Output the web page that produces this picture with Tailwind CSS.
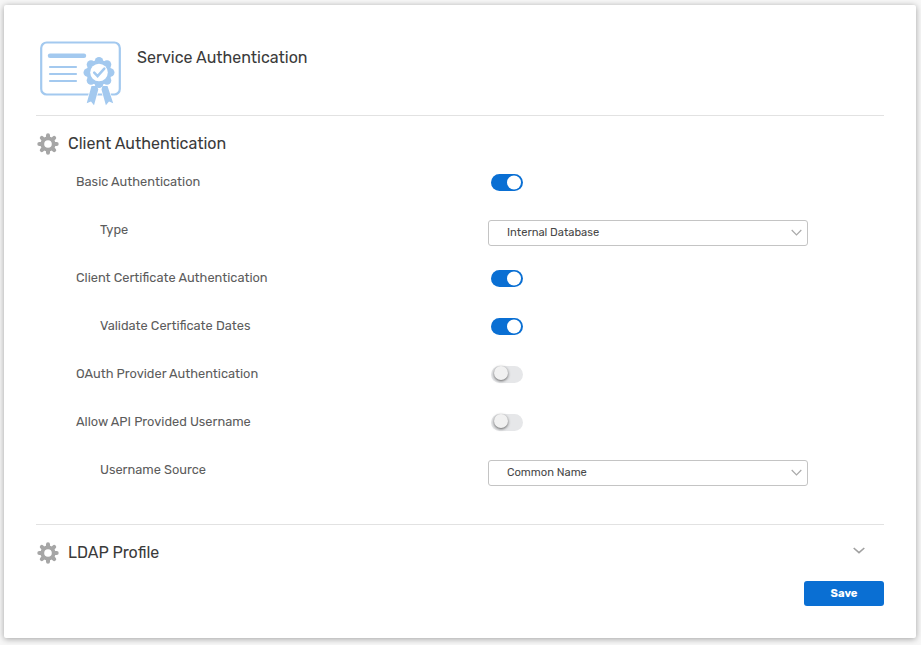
<!DOCTYPE html>
<html lang="en">
<head>
<meta charset="utf-8">
<title>Service Authentication</title>
<script src="https://cdn.jsdelivr.net/npm/@tailwindcss/browser@4"></script>
</head>
<body class="h-[645px] overflow-hidden bg-[#f7f7f7] pt-[5px] pl-1 font-['Rubik','Roboto',sans-serif] text-[12.8px] font-normal text-[#5c5c5c]">
<svg class="hidden">
  <defs>
    <g id="gear">
      <g stroke="#a6a6a6" stroke-width="4" stroke-linecap="round">
        <path d="M11 2.300V19.700M2.300 11H19.700M4.800 4.800L17.200 17.200M17.200 4.800L4.800 17.200"/>
      </g>
      <circle cx="11" cy="11" r="7.600" fill="#a6a6a6"/>
      <circle cx="11" cy="11" r="3.800" fill="#fff"/>
    </g>
  </defs>
</svg>
<main class="h-[633px] w-[912px] rounded-xs bg-white px-8 shadow-[0_1px_6px_rgba(0,0,0,0.35)]">
  <header class="flex h-[111px] border-b border-[#e2e2e2] pt-[35px] pl-1">
    <svg class="h-[66px] w-[82px] shrink-0" viewBox="0 0 82 66" fill="none">
      <rect x="1.2" y="2.500" width="78.600" height="52" rx="5.500" stroke="#a3c9ef" stroke-width="2.200"/>
      <path d="M10 15.700H44" stroke="#a3c9ef" stroke-width="4.400" stroke-linecap="round"/>
      <path d="M10 27H36M10 34H36M10 41H36" stroke="#a3c9ef" stroke-width="2.200" stroke-linecap="round"/>
      <g fill="#a3c9ef" stroke="#fff" stroke-width="1.400" paint-order="stroke">
        <path d="M51.500 46L46.700 63.300L51 61.500L54 65.200L58.300 49.500L57 46ZM67.500 46L73.200 63.300L69 61.500L65.900 65.200L61.500 49.500L62.500 46Z"/>
      </g>
      <g fill="#a3c9ef">
        <circle cx="59" cy="32.500" r="12.500"/>
        <circle cx="59" cy="21.300" r="4.300"/><circle cx="67" cy="24.600" r="4.300"/>
        <circle cx="70.200" cy="32.500" r="4.300"/><circle cx="67" cy="40.400" r="4.300"/>
        <circle cx="59" cy="43.700" r="4.300"/><circle cx="51" cy="40.400" r="4.300"/>
        <circle cx="47.800" cy="32.500" r="4.300"/><circle cx="51" cy="24.600" r="4.300"/>
      </g>
      <circle cx="59" cy="32.500" r="8.800" fill="#fff"/>
      <path d="M54.200 32.600L57.600 36.200L64.300 28.700" stroke="#a3c9ef" stroke-width="2.500" stroke-linecap="round"/>
    </svg>
    <h1 class="ml-[15px] pt-[6px] text-[16px] leading-6 text-[#3a3a3a]">Service Authentication</h1>
  </header>

  <section class="h-[409px] border-b border-[#e2e2e2] pt-4">
    <div class="flex h-6 items-center">
      <svg class="h-[22px] w-[22px] translate-x-[1px]" viewBox="0 0 22 22"><use href="#gear"/></svg>
      <h2 class="ml-[10px] text-[16px] leading-6 text-[#3a3a3a]">Client Authentication</h2>
    </div>
    <div class="grid auto-rows-[48px] grid-cols-[412px_320px] pl-10 pt-[3px] leading-6">
      <div class="pt-[11px]">Basic Authentication</div>
      <div class="pt-[15px] pl-[3px]"><div class="flex h-[17px] w-8 items-center justify-end rounded-full bg-[#0a6fd3] pr-[2px]"><span class="size-[14px] -translate-y-[0.5px] rounded-full bg-white"></span></div></div>

      <div class="pt-[11px] pl-6">Type</div>
      <div class="pt-[13px]"><div class="flex h-[26px] items-center justify-between rounded-[3px] border border-[#c4c4c4] pr-[5px] pl-[18px] text-[11.2px] text-[#484848]"><span>Internal Database</span><svg class="h-[7px] w-[11px] -translate-y-[1px]" viewBox="0 0 11 7" fill="none" stroke="#a9a9a9" stroke-width="1.200"><path d="M.7 1L5.500 5.800L10.300 1"/></svg></div></div>

      <div class="pt-[11px]">Client Certificate Authentication</div>
      <div class="pt-[15px] pl-[3px]"><div class="flex h-[17px] w-8 items-center justify-end rounded-full bg-[#0a6fd3] pr-[2px]"><span class="size-[14px] -translate-y-[0.5px] rounded-full bg-white"></span></div></div>

      <div class="pt-[11px] pl-6">Validate Certificate Dates</div>
      <div class="pt-[15px] pl-[3px]"><div class="flex h-[17px] w-8 items-center justify-end rounded-full bg-[#0a6fd3] pr-[2px]"><span class="size-[14px] -translate-y-[0.5px] rounded-full bg-white"></span></div></div>

      <div class="pt-[11px]">OAuth Provider Authentication</div>
      <div class="pt-[15px] pl-[3px]"><div class="flex h-[17px] w-8 rounded-full bg-[#e6e7e9] pl-[2.5px]"><span class="size-[14px] rounded-full bg-[#f1f1f1] shadow-[0_1px_3px_rgba(0,0,0,0.6)]"></span></div></div>

      <div class="pt-[11px]">Allow API Provided Username</div>
      <div class="pt-[15px] pl-[3px]"><div class="flex h-[17px] w-8 rounded-full bg-[#e6e7e9] pl-[2.5px]"><span class="size-[14px] rounded-full bg-[#f1f1f1] shadow-[0_1px_3px_rgba(0,0,0,0.6)]"></span></div></div>

      <div class="pt-[11px] pl-6">Username Source</div>
      <div class="pt-[13px]"><div class="flex h-[26px] items-center justify-between rounded-[3px] border border-[#c4c4c4] pr-[5px] pl-[18px] text-[11.2px] text-[#484848]"><span>Common Name</span><svg class="h-[7px] w-[11px] -translate-y-[1px]" viewBox="0 0 11 7" fill="none" stroke="#a9a9a9" stroke-width="1.200"><path d="M.7 1L5.500 5.800L10.300 1"/></svg></div></div>
    </div>
  </section>

  <section class="flex h-[56px] items-center">
    <svg class="h-[22px] w-[22px] translate-x-[1px]" viewBox="0 0 22 22"><use href="#gear"/></svg>
    <h2 class="ml-[10px] text-[16px] leading-6 text-[#3a3a3a]">LDAP Profile</h2>
    <svg class="mr-[19px] mb-[5px] ml-auto h-[7px] w-3" viewBox="0 0 12 7" fill="none" stroke="#a0a0a0" stroke-width="1.600"><path d="M.7 1L6 5.700L11.300 1"/></svg>
  </section>
  <div class="flex justify-end">
    <button class="h-[25px] w-20 rounded-[3px] bg-[#0a6fd3] pt-px text-[11.2px] font-bold text-white">Save</button>
  </div>
</main>
</body>
</html>
